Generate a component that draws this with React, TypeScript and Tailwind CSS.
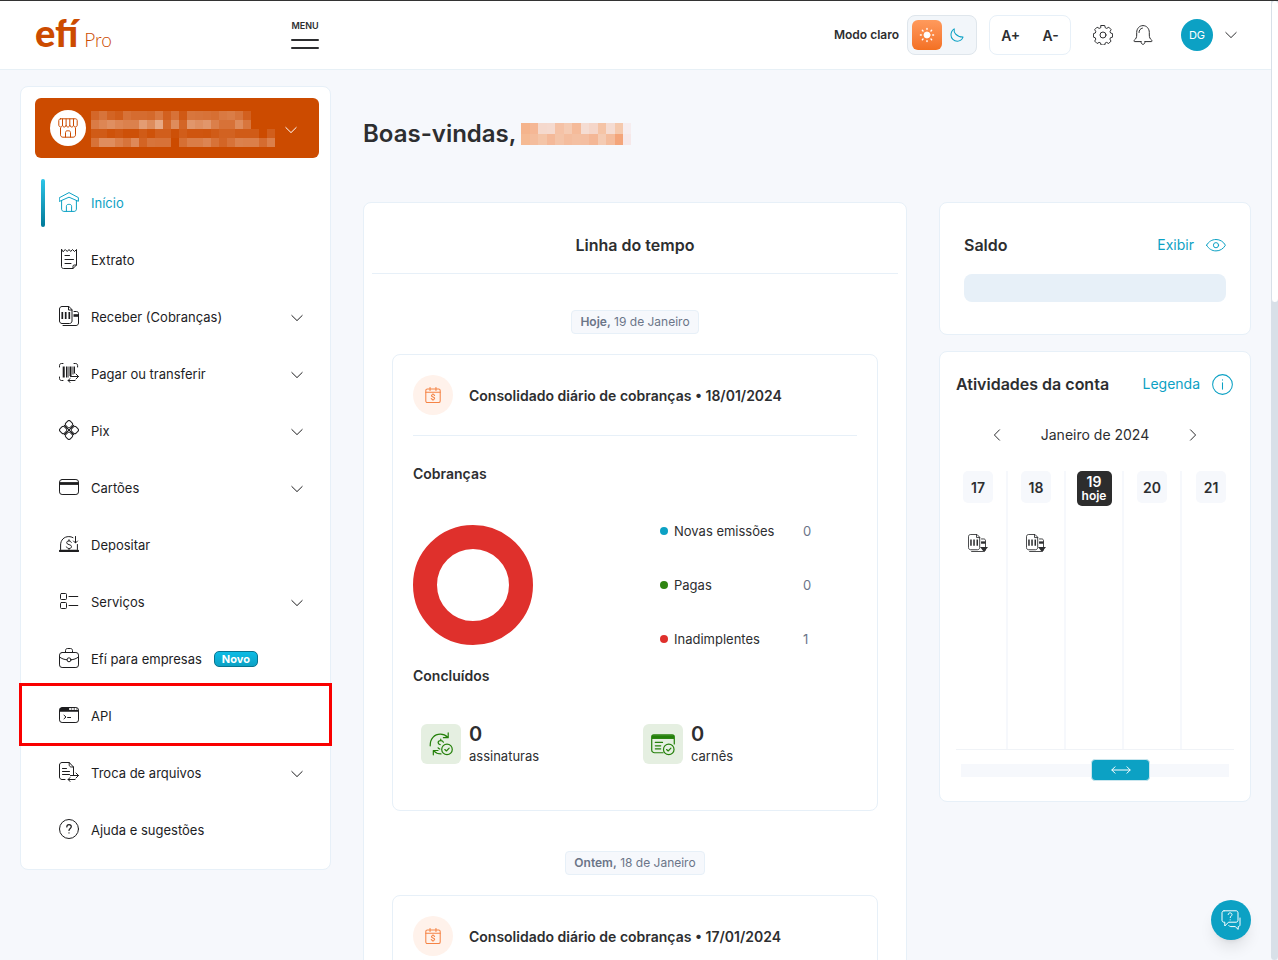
import { useState, type ReactNode } from 'react'
import clsx from 'clsx'

type IconProps = { className?: string; children?: ReactNode }

function Icon({ className = 'size-5', children }: IconProps) {
  return (
    <svg
      viewBox="0 0 20 20"
      fill="none"
      stroke="currentColor"
      strokeWidth="1"
      strokeLinecap="round"
      strokeLinejoin="round"
      aria-hidden="true"
      className={clsx('shrink-0', className)}
    >
      {children}
    </svg>
  )
}

function ChevronDown({ className }: { className?: string }) {
  return (
    <svg viewBox="0 0 12 8" fill="none" stroke="currentColor" strokeWidth="1" strokeLinecap="round" strokeLinejoin="round" aria-hidden="true" className={clsx('h-2 w-3 shrink-0', className)}>
      <path d="M.8 1.500 6 6.600l5.200-5.100" />
    </svg>
  )
}

const icons = {
  home: (
    <>
      <path d="M.6 5.600 10 .6l9.400 5v3.700L10 5.200.6 9.300z" />
      <path d="M2.600 8.600v8.600c0 1.200 1 2.200 2.200 2.200h10.400c1.200 0 2.200-1 2.200-2.200V8.600" />
      <path d="M7.400 19.400v-5.200c0-1 .8-1.800 1.800-1.800h1.600c1 0 1.800.8 1.800 1.800v5.200" />
    </>
  ),
  receipt: (
    <>
      <path d="M2.500.5v17c0 1.200.8 2 2 2h9.500l3.500-3.500V.5l-2 2-2-2-1.800 2L10 .5 8.200 2.500l-1.900-2-2 2z" />
      <path d="M14 19.500v-2.300c0-.8.5-1.200 1.200-1.200h2.300M6 6.500h4.500M6 10.500h8.500M6 14.500h6" />
    </>
  ),
  charge: (
    <>
      <path d="M9.500.5H3C1.600.5.500 1.600.500 3v12c0 1.400 1.100 2.500 2.500 2.500h7.500c1.400 0 2.500-1.100 2.500-2.500V4z" />
      <path d="M9.500.5V4H13M15 5.500h2.500c1.200 0 2 .8 2 2V17c0 1.400-1 2.500-2.400 2.500H4" />
      <path d="M14.500 9.500h5" strokeWidth="2.600" strokeLinecap="butt" />
      <path d="M3.300 6v7M6.700 6v7M10.300 6v7" strokeWidth="1.700" strokeLinecap="butt" />
    </>
  ),
  transfer: (
    <>
      <path d="M.5 4V2.500c0-1.200.8-2 2-2H4M15 .5h1.600c1.200 0 2 .8 2 2V4M.5 14v1.500c0 1.200.8 2 2 2H4" />
      <path d="M4.700 3.500v11M11.500 3.500v9.500" strokeWidth="2" strokeLinecap="butt" />
      <path d="M7.500 3.500v11M9 3.500v11M14 3.500v8M15.500 3.500v7" strokeLinecap="butt" />
      <path d="M11.500 13.500h8M17 11l2.500 2.500L17 16M16 17.500H9M11.200 15.500l-2.200 2 2.200 2" />
    </>
  ),
  pix: (
    <>
      <rect x="6.900" y="1.100" width="6.200" height="6.200" rx="1.900" transform="rotate(45 10 4.200)" />
      <rect x="6.900" y="12.700" width="6.200" height="6.200" rx="1.900" transform="rotate(45 10 15.800)" />
      <rect x="1.100" y="6.900" width="6.200" height="6.200" rx="1.900" transform="rotate(45 4.200 10)" />
      <rect x="12.700" y="6.900" width="6.200" height="6.200" rx="1.900" transform="rotate(45 15.800 10)" />
      <path d="m5.200 5.200 9.600 9.600M14.800 5.200l-9.600 9.600" />
    </>
  ),
  card: (
    <>
      <rect x=".5" y="2.500" width="19" height="15" rx="2.600" />
      <path d="M.5 6.500h19" strokeWidth="2.800" strokeLinecap="butt" />
    </>
  ),
  deposit: (
    <>
      <path d="M1.600 15.500V11c0-5 3.500-8.400 8.200-8.400 1.600 0 3 .3 4.200 1M18.400 10.500v5" />
      <path d="M1 16.900h18" strokeWidth="2.200" />
      <path d="M12.300 8.300c-.4-.9-1.200-1.400-2.300-1.400-1.400 0-2.300.7-2.300 1.800 0 2.500 4.800 1.300 4.800 3.900 0 1.200-1 1.900-2.400 1.900-1.300 0-2.200-.6-2.600-1.600M10 5.700v1.200M10 14.500v1" />
      <path d="M16.500 2.500v6.300M14.500 7l2 2 2-2" />
    </>
  ),
  services: (
    <>
      <rect x="1.500" y="2.500" width="6" height="6" rx="1" />
      <rect x="1.500" y="11.500" width="6" height="6" rx="1" />
      <path d="M10 5.500h8.800M10 14.500h8.800" />
    </>
  ),
  briefcase: (
    <>
      <rect x=".5" y="4.500" width="19" height="15" rx="2.600" />
      <path d="M6.500 4.500v-2c0-1.100.8-2 1.900-2h3.200c1.100 0 1.900.9 1.900 2v2M.6 9c2 1.700 4.600 2.600 7.400 2.800M12 11.800c2.800-.2 5.400-1.100 7.400-2.800" />
      <circle cx="10" cy="11.800" r="2" />
    </>
  ),
  api: (
    <>
      <rect x=".5" y="2.500" width="19" height="15" rx="2.600" />
      <path d="M.8 4h9.400M.5 5.800h19" strokeWidth="1.800" strokeLinecap="butt" />
      <path d="M11.800 4h1.400M14.600 4H16M17.300 4h1" strokeLinecap="butt" />
      <path d="m5 10.200 2 1.800-2 1.800M8.600 12.500h3" />
    </>
  ),
  files: (
    <>
      <path d="M6 17.500H3C1.600 17.500.500 16.400.500 15V3C.5 1.600 1.600.5 3 .5h7.200L14.500 5v8" />
      <path d="M10.200.5v2.300c0 1.300.9 2.200 2.200 2.200h2.100M3.500 6.500h4M3.500 9.500h7M3.500 12.500h7" />
      <path d="M11.500 13.500h8M17 11l2.500 2.500L17 16M16 17.500H9M11.200 15.500l-2.200 2 2.200 2" />
    </>
  ),
  help: (
    <>
      <circle cx="10" cy="10" r="9.500" />
      <path d="M7.800 8c0-1.400.9-2.300 2.200-2.300s2.300.9 2.300 2.100c0 1.600-2.300 1.800-2.300 3.600M10 13.800v.2" strokeWidth="1.200" />
    </>
  ),
  store: (
    <>
      <path d="M2.500.8h15c.9 0 1.700.8 1.700 1.700V7c0 1.200-.8 2-1.800 2s-1.900-.8-1.900-2c0 1.200-.8 2-1.800 2s-1.900-.8-1.900-2c0 1.200-.8 2-1.800 2s-1.900-.8-1.900-2c0 1.200-.8 2-1.800 2S4.500 8.200 4.500 7c0 1.200-.8 2-1.800 2S.8 8.200.8 7V2.500C.8 1.600 1.600.8 2.500.8zM4.500 1v6M8.100 1v6M11.800 1v6M15.500 1v6" />
      <path d="M2.500 10v6.800c0 1.400 1 2.400 2.400 2.400h10.200c1.400 0 2.400-1 2.400-2.400V10M7.500 19v-4.500c0-1 .7-1.700 1.700-1.700h1.600c1 0 1.700.7 1.700 1.700V19" />
    </>
  ),
  gear: (
    <>
      <path d="M8.200 1h3.600l.6 2.300 1.400.6 2.100-1.200 2.300 2.400-1.100 2.100.6 1.300 2 .7v3.400l-2.100.6-.6 1.400 1.100 2-2.300 2.400-2.100-1.100-1.300.5-.6 2.100H8.200l-.6-2.100-1.400-.5-2 1.100-2.400-2.400 1.100-2-.6-1.400L.5 12.600V9.200l1.900-.7.500-1.300-1.100-2.100 2.400-2.400 2.100 1.200 1.300-.6z" transform="translate(-.1 -.5)" />
      <circle cx="10" cy="10" r="3" />
    </>
  ),
  bell: (
    <>
      <path d="M8 16.600H1.700c-.8 0-1.100-.8-.5-1.300 1.800-1.400 2.500-3 2.500-5.300V7.400C3.700 3.600 6.400.6 10 .6s6.300 3 6.300 6.800V10c0 2.300.7 3.900 2.500 5.300.6.5.3 1.300-.5 1.300H12" />
      <path d="M8 16.600c0 1.700.8 2.700 2 2.700s2-1 2-2.700M6 7.500c0-2.200 1.300-4 3.400-4.400" />
    </>
  ),
  sun: (
    <>
      <circle cx="10" cy="10" r="3.800" fill="currentColor" />
      <path d="M10 1.800v1M10 17.200v1M1.800 10h1M17.200 10h1M4.200 4.200l.8.8M15 15l.8.8M4.200 15.800l.8-.8M15 5l.8-.8" strokeWidth="1.800" />
    </>
  ),
  moon: <path d="M6 1.200C5 6 8.500 12.500 18.600 13 17 16.800 14 18.800 10.500 18.800 5.500 18.800 1.400 15 1.400 10 1.400 6 3.200 3 6 1.200z" strokeWidth="1.500" />,
  calendar: (
    <>
      <rect x="1" y="2.400" width="18" height="17" rx="2" strokeWidth="1.300" />
      <path d="M1 6.500h18M6.300.6v3.800M13.700.6v3.800M12 10.700c-.4-.8-1-1.200-2-1.200s-1.900.5-1.900 1.400c0 2 4 1 4 3.200 0 1-.9 1.600-2.100 1.600-1.100 0-1.800-.5-2.200-1.300M10 8.500v1M10 15.700v1" strokeWidth="1.300" />
    </>
  ),
  subscription: (
    <>
      <path d="M1 11.500C.8 5.500 4.500 1.800 9.500 1.800c2.600 0 4.500 1 6 2.600M16 .8v3.900h-4M3.600 19v-3.600h3.900M4 15.700c1.500 1.700 3.500 2.600 6 2.600" />
      <path d="M12 8.500c-.4-.9-1.100-1.300-2.200-1.300-1.300 0-2.200.7-2.200 1.700 0 .9.7 1.300 1.700 1.600M9.800 6v1.200M7.600 13.200c.3.500.8.8 1.400 1" />
      <circle cx="15" cy="14.500" r="4.400" />
      <path d="m13.200 14.600 1.300 1.200 2.300-2.300" />
    </>
  ),
  booklet: (
    <>
      <path d="M10 17.300H3c-1.400 0-2.400-1-2.400-2.400V4c0-1 .7-1.700 1.700-1.700h15.400c1 0 1.700.7 1.700 1.700v6" />
      <path d="M.8 4.200h18.400" strokeWidth="3.200" strokeLinecap="butt" />
      <path d="M3.600 8.700h6M3.600 11.500h4.500M3.600 14h4.500" />
      <circle cx="14.800" cy="14.500" r="4.400" />
      <path d="m13 14.600 1.300 1.200 2.300-2.300" />
    </>
  ),
  eye: (
    <>
      <path d="M.6 10.200C2.600 6.600 6 4.500 10 4.500s7.400 2.100 9.400 5.700c-2 3.600-5.400 5.700-9.400 5.700S2.600 13.800.6 10.200z" />
      <circle cx="10" cy="10.200" r="2.600" />
    </>
  ),
  info: (
    <>
      <circle cx="10" cy="10" r="9.400" />
      <path d="M10 8.400v6M10 5.400v.4" />
    </>
  ),
  chat: (
    <>
      <path d="M3 .8h12c1.200 0 2 .8 2 2v7.400c0 1.200-.8 2-2 2H7.500L3.800 16v-3.800H3c-1.200 0-2-.8-2-2V2.800c0-1.200.8-2 2-2z" />
      <path d="M19 8v6.800c0 1-.8 1.800-1.800 1.800v2.800l-3-2.800H9.800c-.9 0-1.600-.4-2-1M7.200 4.500c.1-1 .8-1.600 1.900-1.600s1.900.7 1.900 1.700c0 1.300-1.800 1.500-1.800 3M9.200 9.800v.1" />
    </>
  ),
}

type MenuItem = {
  label: string
  icon: keyof typeof icons
  expandable?: boolean
  active?: boolean
  badge?: string
  highlighted?: boolean
}

const menu: MenuItem[] = [
  { label: 'Início', icon: 'home', active: true },
  { label: 'Extrato', icon: 'receipt' },
  { label: 'Receber (Cobranças)', icon: 'charge', expandable: true },
  { label: 'Pagar ou transferir', icon: 'transfer', expandable: true },
  { label: 'Pix', icon: 'pix', expandable: true },
  { label: 'Cartões', icon: 'card', expandable: true },
  { label: 'Depositar', icon: 'deposit' },
  { label: 'Serviços', icon: 'services', expandable: true },
  { label: 'Efí para empresas', icon: 'briefcase', badge: 'Novo' },
  { label: 'API', icon: 'api', highlighted: true },
  { label: 'Troca de arquivos', icon: 'files', expandable: true },
  { label: 'Ajuda e sugestões', icon: 'help' },
]

// Opacity (in %) of each white block that hides the account holder
const accountMask = [
  [16, 23, 14, 10, 22, 19, 19, 17, 25, 12, 22, 8, 24, 23, 22, 20, 26, 28, 23, 12, 0, 0, 0],
  [27, 33, 38, 33, 30, 30, 45, 36, 52, 17, 36, 15, 42, 38, 42, 29, 22, 22, 36, 24, 0, 0, 0],
  [9, 9, 4, 7, 3, 3, 9, 4, 11, 11, 3, 10, 6, 6, 5, 9, 13, 13, 9, 9, 9, 0, 11],
  [22, 37, 37, 29, 23, 35, 14, 23, 22, 22, 0, 20, 28, 28, 32, 22, 15, 22, 30, 29, 29, 19, 29],
]

const nameMask = [
  ['#f5b48c', '#f5b795', '#f5d9cd', '#f5dacf', '#f5c2a6', '#f5cbb3', '#f5bb9a', '#f5ddd3', '#f5d6c9', '#f5c4a6', '#f5dcd2', '#f5c9ad', '#f6edef'],
  ['#f5ba93', '#f4bd9d', '#f4c5a8', '#f4b999', '#f4c4a8', '#f4bd9e', '#f4c0a2', '#f4bfa2', '#f4b796', '#f4cbb3', '#f4bc9c', '#f4a57a', '#f6e8e9'],
]

function Header() {
  return (
    <header className="flex h-[69px] items-center justify-between border-b border-[#e7f0f6] bg-white pr-[34px] pl-[35px]">
      <div className="flex w-[284px] items-center justify-between pb-[3px]">
        <a href="#" className="flex items-baseline gap-1.5 font-['Lato',sans-serif] text-[#cc4b00]">
          <span className="text-[38px] leading-10 font-black">efí</span>
          <span className="text-[19px] font-light">Pro</span>
        </a>
        <button type="button" className="flex w-7 flex-col items-center text-[#2d2e30]">
          <span className="text-[9px] leading-4 font-semibold">MENU</span>
          <span className="mt-[5px] h-0.5 w-full rounded-full bg-current" />
          <span className="mt-1.5 h-0.5 w-full rounded-full bg-current" />
        </button>
      </div>

      <div className="flex items-center text-[#2d2e30]">
        <span className="mr-2 text-[12px] font-semibold">Modo claro</span>
        <button type="button" aria-label="Alternar tema" className="mr-3 flex h-10 w-[70px] items-center gap-2 rounded-lg border border-[#dfe6ec] bg-[#f2f6fa] pl-1">
          <span className="flex size-[30px] items-center justify-center rounded-md bg-linear-to-b from-[#ff9a5c] to-[#f37021] text-white">
            <Icon className="size-4">{icons.sun}</Icon>
          </span>
          <Icon className="size-[14px] text-[#0ca1c4]">{icons.moon}</Icon>
        </button>
        <div className="flex h-10 w-[82px] items-center justify-around rounded-lg border border-[#e7f0f8] text-[14px] font-semibold">
          <button type="button">A+</button>
          <button type="button">A-</button>
        </div>
        <button type="button" aria-label="Configurações" className="ml-[22px]">
          <Icon>{icons.gear}</Icon>
        </button>
        <button type="button" aria-label="Notificações" className="ml-5">
          <Icon>{icons.bell}</Icon>
        </button>
        <button type="button" className="ml-7 flex items-center gap-3">
          <span className="flex size-8 items-center justify-center rounded-full bg-[#0ca1c4] text-[11px] text-white">DG</span>
          <ChevronDown />
        </button>
      </div>
    </header>
  )
}

function Sidebar() {
  return (
    <aside className="mt-4 w-[311px] shrink-0 self-start rounded-lg border border-[#e7f0f8] bg-white pt-[11px] pr-[11px] pb-[15px] pl-[14px]">
      <button type="button" aria-label="Trocar conta" className="flex h-[60px] w-full items-center rounded-md bg-[#cc4b00] pr-[22px] pl-[15px]">
        <span className="flex size-9 items-center justify-center rounded-full bg-white text-[#cc4b00]">
          <Icon>{icons.store}</Icon>
        </span>
        <span className="mt-0.5 ml-[5px] grid grid-cols-[repeat(23,8px)]">
          {accountMask.flat().map((opacity, i) => (
            <span key={i} className="h-[9px] bg-white" style={{ opacity: opacity / 100 }} />
          ))}
        </span>
        <ChevronDown className="mt-1 ml-auto text-white" />
      </button>

      <nav className="mt-[21px] flex flex-col gap-[9px]">
        {menu.map((item) => (
          <a
            key={item.label}
            href="#"
            className={clsx('relative flex h-12 items-center pr-4 pl-1.5 text-[13px]', item.active ? 'text-[#0ca1c4]' : 'text-[#1d1d1f]')}
          >
            <span className={clsx('h-full w-1 rounded-full', item.active && 'bg-linear-to-b from-[#2cc5e8] to-[#007a99]')} />
            <Icon className="mr-3 mb-0.5 ml-[14px] size-5">{icons[item.icon]}</Icon>
            <span className="pt-0.5">{item.label}</span>
            {item.badge && (
              <span className="ml-3 flex h-4 w-11 items-center justify-center rounded-[5px] border border-[#087490] bg-linear-to-b from-[#0cbce6] to-[#0ca1c4] text-[11px] leading-3 font-bold text-white">
                {item.badge}
              </span>
            )}
            {item.expandable && <ChevronDown className="mt-0.5 ml-auto" />}
            {item.highlighted && <span className="absolute -top-[9px] -right-[13px] -bottom-1.5 -left-4 border-3 border-[#f90000]" />}
          </a>
        ))}
      </nav>
    </aside>
  )
}

const legend = [
  { label: 'Novas emissões', value: 0, dot: 'bg-[#0ca1c4]' },
  { label: 'Pagas', value: 0, dot: 'bg-[#2f8511]' },
  { label: 'Inadimplentes', value: 1, dot: 'bg-[#df302c]' },
]

const finished = [
  { label: 'assinaturas', icon: icons.subscription },
  { label: 'carnês', icon: icons.booklet },
]

function DayChip({ label, date }: { label: string; date: string }) {
  return (
    <p className="mx-auto flex h-6 w-fit items-center rounded-sm border border-[#e7f0f8] bg-[#f6f8fc] px-2 text-[12px] text-[#6b7588]">
      <span>
        <strong className="font-semibold">{label},</strong> {date}
      </span>
    </p>
  )
}

function DailySummary({ date, children }: { date: string; children?: ReactNode }) {
  return (
    <article className="mx-7 mt-5 mb-10 min-h-[457px] rounded-lg border border-[#e7f0f8] p-5">
      <header className="flex items-center gap-4 border-b border-[#e7f0f8] pb-5">
        <span className="flex size-10 shrink-0 items-center justify-center rounded-full bg-[#fff2eb] text-[#f58345]">
          <Icon className="size-4">{icons.calendar}</Icon>
        </span>
        <h3 className="text-[14px] font-semibold whitespace-nowrap">Consolidado diário de cobranças • {date}</h3>
      </header>
      {children}
    </article>
  )
}

function ChargesReport() {
  return (
    <>
      <h4 className="mt-7 text-[14px] leading-5 font-semibold">Cobranças</h4>
      <div className="mt-[37px] flex items-center justify-between pr-10">
        <svg viewBox="0 0 120 120" role="img" aria-label="Cobranças inadimplentes" className="size-[120px]">
          <circle cx="60" cy="60" r="48" fill="none" stroke="#df302c" strokeWidth="24" />
        </svg>
        <dl className="flex w-[157px] flex-col gap-[34px] text-[13px] leading-5">
          {legend.map((row) => (
            <div key={row.label} className="flex items-center">
              <span className={clsx('mr-1.5 size-2 rounded-full', row.dot)} />
              <dt className="w-[129px]">{row.label}</dt>
              <dd className="text-[#6b7588]">{row.value}</dd>
            </div>
          ))}
        </dl>
      </div>

      <h4 className="mt-[17px] text-[14px] leading-5 font-semibold">Concluídos</h4>
      <div className="mt-9 grid grid-cols-2">
        {finished.map((entry) => (
          <div key={entry.label} className="flex items-center gap-2 pl-2">
            <span className="flex size-10 items-center justify-center rounded-md bg-[#e5efe1] text-[#24800a]">
              <Icon className="size-6">{entry.icon}</Icon>
            </span>
            <p className="flex flex-col text-[13px]">
              <strong className="text-[20px] leading-6 font-semibold">0</strong>
              <span className="leading-5">{entry.label}</span>
            </p>
          </div>
        ))}
      </div>
    </>
  )
}

function Timeline() {
  return (
    <section className="mt-[52px] rounded-lg border border-[#e7f0f8] bg-white">
      <h2 className="mx-2 border-b border-[#e7f0f8] pt-[30px] pb-4 text-center text-[16px] leading-6 font-semibold">Linha do tempo</h2>
      <div className="pt-9">
        <DayChip label="Hoje" date="19 de Janeiro" />
        <DailySummary date="18/01/2024">
          <ChargesReport />
        </DailySummary>
        <DayChip label="Ontem" date="18 de Janeiro" />
        <DailySummary date="17/01/2024" />
      </div>
    </section>
  )
}

function Balance() {
  return (
    <section className="rounded-lg border border-[#e7f0f8] bg-white px-6 pt-[30px] pb-8">
      <div className="flex items-center justify-between">
        <h2 className="text-[16px] leading-6 font-semibold">Saldo</h2>
        <button type="button" className="flex items-center gap-3 text-[14px] leading-5 text-[#0ca1c4]">
          Exibir
          <Icon>{icons.eye}</Icon>
        </button>
      </div>
      <div className="mt-[17px] h-7 rounded-lg bg-[#e7f0f8]" />
    </section>
  )
}

const days = [
  { day: 17, charges: true },
  { day: 18, charges: true },
  { day: 19, today: true },
  { day: 20 },
  { day: 21 },
]

function Activities() {
  const [position, setPosition] = useState(62)

  return (
    <section className="mt-4 rounded-lg border border-[#e7f0f8] bg-white pt-5 pb-5">
      <div className="flex items-center justify-between pr-[17px] pl-4">
        <h2 className="text-[16px] leading-6 font-semibold">Atividades da conta</h2>
        <button type="button" className="flex items-center gap-3 text-[14px] leading-5 text-[#0ca1c4]">
          Legenda
          <Icon className="size-[21px]">{icons.info}</Icon>
        </button>
      </div>

      <div className="mt-[27px] flex items-center justify-between px-[51px] text-[14px] leading-6">
        <button type="button" aria-label="Mês anterior">
          <ChevronDown className="rotate-90" />
        </button>
        Janeiro de 2024
        <button type="button" aria-label="Próximo mês">
          <ChevronDown className="-rotate-90" />
        </button>
      </div>

      <div className="mt-6 grid h-[278px] grid-cols-5 divide-x-2 divide-[#f6f8fc] px-[10px]">
        {days.map(({ day, charges, today }) => (
          <div key={day} className="flex flex-col items-center gap-[31px]">
            {today ? (
              <span className="flex h-[35px] w-[35px] flex-col items-center justify-center rounded-[5px] bg-[#2d2d2d] text-[14px] leading-[14px] font-semibold text-white">
                {day}
                <span className="text-[12px]">hoje</span>
              </span>
            ) : (
              <span className="flex h-8 w-[30px] items-center justify-center rounded-[5px] bg-[#f6f8fc] text-[14px] font-semibold">{day}</span>
            )}
            {charges && (
              <button type="button" aria-label={`Cobranças do dia ${day}`} className="flex items-end">
                <Icon className="size-[18px]">{icons.charge}</Icon>
                <svg viewBox="0 0 8 5" fill="currentColor" aria-hidden="true" className="-ml-1.5 h-[5px] w-2">
                  <path d="M0 0h8L4 5z" />
                </svg>
              </button>
            )}
          </div>
        ))}
      </div>
      <div className="mx-4 h-px bg-[#f0f3f7]" />

      <div className="relative mx-[21px] mt-[9px] h-[22px]">
        <input
          type="range"
          min="0"
          max="100"
          aria-label="Rolar dias"
          value={position}
          onChange={(event) => setPosition(Number(event.target.value))}
          className="block h-[22px] w-full appearance-none bg-transparent [&::-webkit-slider-runnable-track]:h-[13px] [&::-webkit-slider-runnable-track]:bg-[#f6f8fc] [&::-webkit-slider-thumb]:-mt-[5px] [&::-webkit-slider-thumb]:h-[22px] [&::-webkit-slider-thumb]:w-[59px] [&::-webkit-slider-thumb]:appearance-none [&::-webkit-slider-thumb]:rounded-sm [&::-webkit-slider-thumb]:border [&::-webkit-slider-thumb]:border-[#c9e6ee] [&::-webkit-slider-thumb]:bg-[#0ca1c4]"
        />
        <svg
          viewBox="0 0 20 8"
          fill="none"
          stroke="white"
          strokeLinecap="round"
          strokeLinejoin="round"
          aria-hidden="true"
          className="pointer-events-none absolute top-[7px] ml-5 h-2 w-5"
          style={{ left: `calc((100% - 59px) * ${position / 100})` }}
        >
          <path d="M4 .8.8 4 4 7.200M16 .8 19.200 4 16 7.200M1 4h18" />
        </svg>
      </div>
    </section>
  )
}

function App() {
  return (
    <div className="flex h-screen flex-col overflow-hidden border-t border-[#333] bg-[#f6f8fc] font-['Inter','Liberation_Sans',sans-serif] text-[#2d2e30]">
      <div className="flex min-h-0 flex-1">
        <div className="min-w-0 flex-1 overflow-hidden">
          <Header />
          <div className="flex gap-8 px-5">
            <Sidebar />
            <main className="min-w-0 flex-1 pt-12">
              <h1 className="flex items-center gap-[5px] text-[24px] leading-8 font-semibold whitespace-nowrap">
                Boas-vindas,
                <span className="grid w-[110px] grid-cols-13">
                  {nameMask.flat().map((color, i) => (
                    <span key={i} className="h-[11px]" style={{ backgroundColor: color }} />
                  ))}
                </span>
              </h1>
              <Timeline />
            </main>
            <div className="w-[312px] shrink-0 pt-[132px]">
              <Balance />
              <Activities />
            </div>
          </div>
        </div>
        <div className="w-[7px] shrink-0 rounded-b-sm bg-[#d8e0e8]">
          <div className="h-[301px] rounded-sm border-l border-[#d8e0e8] bg-white" />
        </div>
      </div>

      <button
        type="button"
        aria-label="Abrir chat de ajuda"
        className="fixed right-[27px] bottom-5 flex size-10 items-center justify-center rounded-full bg-[#0ca1c4] text-white shadow-lg"
      >
        <Icon>{icons.chat}</Icon>
      </button>
    </div>
  )
}

export default App
